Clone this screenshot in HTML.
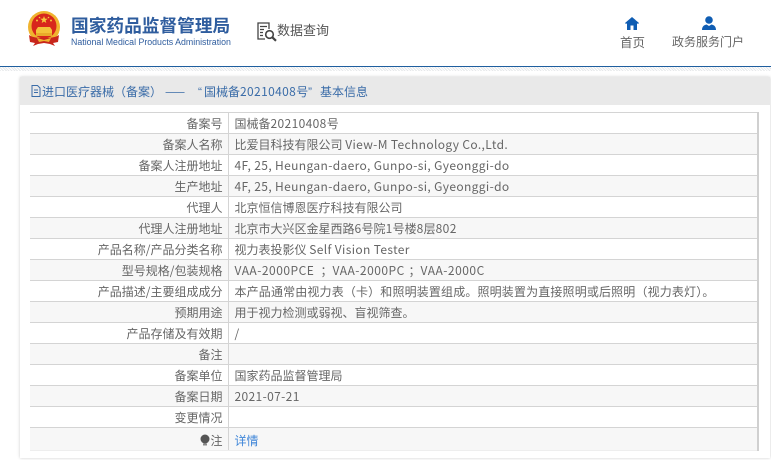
<!DOCTYPE html>
<html lang="zh"><head><meta charset="utf-8"><style>
*{box-sizing:border-box}
html,body{margin:0;padding:0}
body{width:771px;height:460px;overflow:hidden;background:#fff;position:relative;font-family:"Noto Sans CJK SC","Liberation Sans",sans-serif;color:#666}
.a{position:absolute;white-space:nowrap}
#hatch{left:0;top:67px;width:771px;height:4px;background:repeating-linear-gradient(45deg,#e6e8ea 0 1px,#fff 1px 2px)}
#line{left:0;top:66px;width:771px;height:1px;background:#1f5f9f}
#panel{left:20px;top:77px;width:750px;height:381px;background:#fff;box-shadow:0 0 3px #ccc}
#phead{left:20px;top:77px;width:750px;height:28px;background:#e9e9e9;color:#3a6ca8;font-size:12px;line-height:30px}
#phead span{position:absolute;top:0}
table{position:absolute;left:30px;top:112px;width:729px;border-collapse:collapse;table-layout:fixed;font-size:12px;border-top:1px solid #d4d4d4;border-right:2px solid #d0d0d0}
td{height:21px;padding:2px 0 0;line-height:18px;border-bottom:1px solid #d4d4d4;white-space:nowrap;overflow:hidden}
td:first-child{width:198px;text-align:right;padding-right:5px;border-right:1px solid #d4d4d4}
td:last-child{padding-left:6px}
i{font-style:normal;letter-spacing:.36px}
b{font-weight:400;display:inline-block;letter-spacing:.5px}
tr:nth-child(even) td{background:#f7f7f7}
tr:last-child td{height:23px;border-bottom:1px solid #eee;padding-top:3px}
</style></head><body>
<svg class="a" style="left:27px;top:11px" width="34" height="36" viewBox="0 0 34 36">
<circle cx="17" cy="16" r="16" fill="#f0b32e"/><circle cx="17" cy="15" r="12.500" fill="#d8261c"/>
<path d="M17 5l1 2.600 2.700.100-2.100 1.700.700 2.600-2.300-1.500-2.300 1.500.700-2.600-2.100-1.700 2.700-.100z" fill="#f6c63c"/>
<circle cx="10" cy="9.500" r="1" fill="#f6c63c"/><circle cx="24" cy="9.500" r="1" fill="#f6c63c"/><circle cx="12.500" cy="6.500" r=".8" fill="#f6c63c"/><circle cx="21.500" cy="6.500" r=".8" fill="#f6c63c"/>
<path d="M11 16h12l2 3v4H9v-4z" fill="#f4c23a"/><rect x="9" y="22" width="16" height="3" fill="#e9a92a"/>
<path d="M2 24c3 2 7 3 15 3s12-1 15-3l-1 7-5 1 2 3-5-2-6-1-6 1-5 2 2-3-5-1z" fill="#c8261c"/>
<path d="M10 27l7 2 7-2-2 4-5-1-5 1z" fill="#eeb52f"/>
</svg>
<div class="a" style="left:71px;top:12px;font-size:17.700px;line-height:26px;font-weight:700;color:#2f5d9e">国家药品监督管理局</div>
<div class="a" style="left:71px;top:36px;font-size:8.800px;line-height:13px;color:#2f5d9e;font-family:'Liberation Sans',sans-serif">National Medical Products Administration</div>
<svg class="a" style="left:257px;top:22px" width="21" height="20" viewBox="0 0 21 20" fill="none" stroke="#444" stroke-width="1.300">
<path d="M8 17H1V1h11v6"/><path d="M3 4.500h7M3 7.500h4M3 10.500h3M3 13.500h3"/><circle cx="12.500" cy="12.500" r="3.800" stroke-width="1.600"/><path d="M15.300 15.300l3.700 3.500" stroke-width="2.200"/>
</svg>
<div class="a" style="left:277px;top:20px;font-size:13px;line-height:20px;color:#555">数据查询</div>
<svg class="a" style="left:625px;top:17px" width="14" height="13" viewBox="0 0 14 13"><path d="M7 0L0 6l1 1 1-.8V13h3.500V8.500h3V13H12V6.200l1 .8 1-1z" fill="#0f5db3"/></svg>
<div class="a" style="left:620px;top:33px;font-size:12.500px;line-height:18px;color:#666">首页</div>
<svg class="a" style="left:702px;top:16px" width="14" height="14" viewBox="0 0 14 14"><circle cx="7" cy="4" r="3.800" fill="#0f5db3"/><path d="M0 14c0-3.500 2-5 4.500-5.500L7 10l2.500-1.500C12 9 14 10.500 14 14z" fill="#0f5db3"/></svg>
<div class="a" style="left:672px;top:33px;font-size:12px;line-height:18px;color:#666">政务服务门户</div>
<div class="a" id="line"></div><div class="a" id="hatch"></div>
<div class="a" id="panel"></div>
<div class="a" id="phead"><svg style="position:absolute;left:11px;top:8px" width="10" height="12" viewBox="0 0 10 12" fill="none" stroke="#3a6ca8"><path d="M1 .5h5.500L9 3v8.500H1zM3 5h4M3 7.500h4"/></svg><span style="left:22px">进口医疗器械（备案）</span><span style="left:145px">——</span><span style="left:178px;font-family:'Liberation Sans',sans-serif">“</span><span style="left:184px">国械备<i>20210408</i>号</span><span style="left:288px;font-family:'Liberation Sans',sans-serif">”</span><span style="left:300px">基本信息</span></div>
<table>
<tr><td>备案号</td><td>国械备<i>20210408</i>号</td></tr>
<tr><td>备案人名称</td><td>比爱目科技有限公司 <i>View-M Technology Co.,Ltd.</i></td></tr>
<tr><td>备案人注册地址</td><td><i>4F, 25, Heungan-daero, Gunpo-si, Gyeonggi-do</i></td></tr>
<tr><td>生产地址</td><td><i>4F, 25, Heungan-daero, Gunpo-si, Gyeonggi-do</i></td></tr>
<tr><td>代理人</td><td>北京恒信博恩医疗科技有限公司</td></tr>
<tr><td>代理人注册地址</td><td>北京市大兴区金星西路<i>6</i>号院<i>1</i>号楼<i>8</i>层<i>802</i></td></tr>
<tr><td>产品名称/产品分类名称</td><td>视力表投影仪 <i>Self Vision Tester</i></td></tr>
<tr><td>型号规格/包装规格</td><td><b style="width:86px">VAA-2000PCE</b>；<b style="width:76px">VAA-2000PC</b>；<b>VAA-2000C</b></td></tr>
<tr><td>产品描述/主要组成成分</td><td style="letter-spacing:.15px">本产品通常由视力表（卡）和照明装置组成。照明装置为直接照明或后照明（视力表灯）。</td></tr>
<tr><td>预期用途</td><td>用于视力检测或弱视、盲视筛查。</td></tr>
<tr><td>产品存储及有效期</td><td>/</td></tr>
<tr><td>备注</td><td></td></tr>
<tr><td>备案单位</td><td>国家药品监督管理局</td></tr>
<tr><td>备案日期</td><td><i>2021-07-21</i></td></tr>
<tr><td>变更情况</td><td></td></tr>
<tr><td><svg width="10" height="12" viewBox="0 0 10 12" style="vertical-align:-1px"><circle cx="5" cy="5" r="4.500" fill="#555"/><rect x="3" y="9.500" width="4" height="2" fill="#888"/></svg>注</td><td style="color:#3f86d8">详情</td></tr>
</table>
</body></html>
